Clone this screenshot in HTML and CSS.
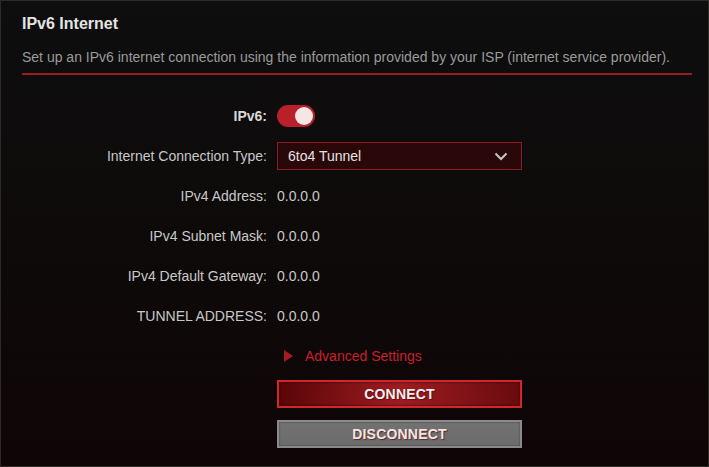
FILE: index.html
```html
<!DOCTYPE html>
<html lang="en">
<head>
    <meta charset="UTF-8">
    <title>IPv6 Internet</title>
    <link rel="stylesheet" href="styles.css">
</head>
<body>
    <div class="panel">
        <h1>IPv6 Internet</h1>
        <p class="desc">Set up an IPv6 internet connection using the information provided by your ISP (internet service provider).</p>

        <div class="form">
            <div class="row">
                <label class="bold">IPv6:</label>
                <div class="toggle"><span class="knob"></span></div>
            </div>
            <div class="row">
                <label>Internet Connection Type:</label>
                <div class="select">
                    <span>6to4 Tunnel</span>
                    <svg width="14" height="9" viewBox="0 0 14 9"><path d="M1.5 1.5 L7 7 L12.5 1.5" fill="none" stroke="#c9c4c4" stroke-width="2"/></svg>
                </div>
            </div>
            <div class="row info">
                <label>IPv4 Address:</label>
                <span class="value">0.0.0.0</span>
            </div>
            <div class="row info">
                <label>IPv4 Subnet Mask:</label>
                <span class="value">0.0.0.0</span>
            </div>
            <div class="row info">
                <label>IPv4 Default Gateway:</label>
                <span class="value">0.0.0.0</span>
            </div>
            <div class="row info">
                <label>TUNNEL ADDRESS:</label>
                <span class="value">0.0.0.0</span>
            </div>
            <div class="row advanced">
                <label></label>
                <a class="adv-link"><span class="arrow"></span>Advanced Settings</a>
            </div>
            <div class="row btn-row">
                <label></label>
                <div class="btn connect">CONNECT</div>
            </div>
            <div class="row btn-row">
                <label></label>
                <div class="btn disconnect">DISCONNECT</div>
            </div>
        </div>
    </div>
</body>
</html>
```

FILE: styles.css
```css
html, body {
    margin: 0;
    padding: 0;
    height: 100%;
}
body {
    font-family: "Liberation Sans", Arial, sans-serif;
    background: #0c0c0c;
}
.panel {
    box-sizing: border-box;
    width: 709px;
    height: 467px;
    border: 1px solid #2e2a27;
    background: linear-gradient(to bottom, #0e0e0e 0%, #0e0909 60%, #0f0506 100%);
    padding: 13px 16px 0 21px;
}
h1 {
    margin: 0;
    font-size: 16px;
    font-weight: bold;
    color: #e4e4e4;
    line-height: 20px;
}
.desc {
    margin: 14px 0 0;
    font-size: 14px;
    color: #9a9a9a;
    line-height: 18px;
    padding-bottom: 7px;
    border-bottom: 2px solid #a01b1f;
}
.form {
    margin-top: 27px;
}
.row {
    display: flex;
    align-items: center;
    height: 28px;
    margin-bottom: 12px;
}
.row.advanced {
    margin-top: 1px;
    margin-bottom: 10px;
}
.row label {
    width: 245px;
    text-align: right;
    padding-right: 10px;
    font-size: 14px;
    color: #c8c8c8;
}
.row label.bold {
    font-weight: bold;
    color: #d8d8d8;
}
.value {
    font-size: 14px;
    color: #c8c8c8;
}
.toggle {
    width: 38px;
    height: 22px;
    border-radius: 11px;
    background: #b92029;
    position: relative;
}
.knob {
    position: absolute;
    right: 2px;
    top: 2px;
    width: 18px;
    height: 18px;
    border-radius: 50%;
    background: #f7e6e8;
}
.select {
    box-sizing: border-box;
    width: 245px;
    height: 28px;
    border: 1px solid #8c1c22;
    background: #2a0809;
    display: flex;
    align-items: center;
    justify-content: space-between;
    padding: 0 13px 0 10px;
    font-size: 14px;
    color: #e2e2e2;
}
.adv-link {
    display: flex;
    align-items: center;
    font-size: 14px;
    color: #c8202b;
    padding-left: 7px;
}
.arrow {
    width: 0;
    height: 0;
    border-top: 6px solid transparent;
    border-bottom: 6px solid transparent;
    border-left: 9px solid #a51c22;
    margin-right: 12px;
}
.btn {
    box-sizing: border-box;
    width: 245px;
    height: 28px;
    display: flex;
    align-items: center;
    justify-content: center;
    font-size: 14px;
    font-weight: bold;
    color: #eee;
    letter-spacing: 0.2px;
    text-shadow: 1px 1px 1px #5a1010;
}
.connect {
    border: 2px solid #d0272d;
    background: linear-gradient(to right, #5a0507 0%, #9e1c21 50%, #6a0b0e 100%);
    box-shadow: inset 0 0 3px rgba(0, 0, 0, 0.6);
}
.disconnect {
    border: 2px solid #8a8a8a;
    background: linear-gradient(to bottom, #727272 0%, #6c6c6c 100%);
    box-shadow: inset 0 0 2px rgba(0, 0, 0, 0.5);
    color: #f0e8e8;
    text-shadow: 1px 1px 1px #6a2020;
}
```
